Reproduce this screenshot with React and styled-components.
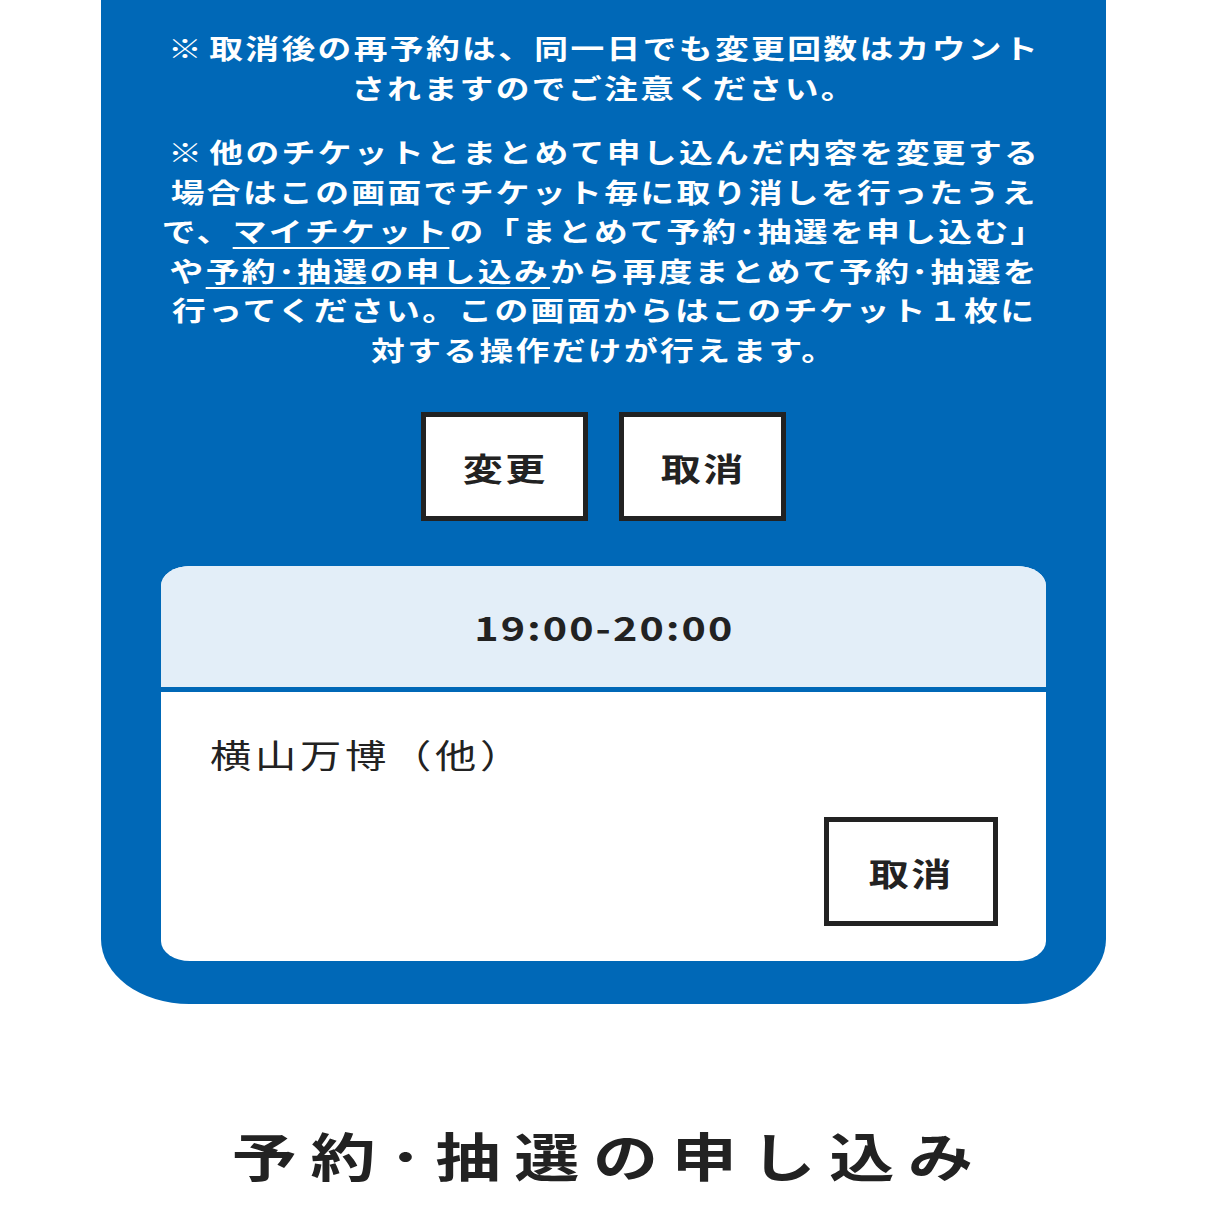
import styled, { createGlobalStyle } from 'styled-components';

const GlobalStyle = createGlobalStyle`
    body {
        margin: 0;
        background: #fff;
        font-family: "Noto Sans CJK JP", "Noto Sans", sans-serif;
        color: #222;
    }
`;

// the source renders its Japanese type a little wide, so text blocks get a horizontal stretch
const WIDE = 'scaleX(1.25)';

const Panel = styled.section`
    width: 1005px;
    margin: 0 auto;
    box-sizing: border-box;
    padding: 28px 60px 43px;
    background-color: #0068b7;
    border-radius: 0 0 88px 88px / 0 0 65px 65px;
`;

const Note = styled.p`
    width: fit-content;
    margin: ${(props) => props.first ? '0 auto' : '25px auto 0'};
    padding-left: 2px;
    color: #fff;
    font-size: 27px;
    font-weight: 700;
    line-height: 39.5px;
    letter-spacing: 1.9px;
    text-align: center;
    white-space: nowrap;
    transform: ${WIDE};
`;

const Mark = styled.span`
    margin-right: 4px;
`;

const Link = styled.a`
    color: #fff;
    text-decoration: underline;
    text-decoration-thickness: 2px;
    text-underline-offset: 5px;
`;

const Actions = styled.div`
    display: flex;
    justify-content: center;
    gap: 31px;
    margin-top: 43px;
`;

const Button = styled.button`
    width: ${(props) => props.wide ? '174px' : '167px'};
    height: 109px;
    box-sizing: border-box;
    padding: 0;
    border: 5px solid #222;
    background: #fff;
    color: #222;
    font-family: inherit;
    font-size: 32px;
    font-weight: 700;
    cursor: pointer;
`;

const Label = styled.span`
    display: inline-block;
    padding-left: 2px;
    letter-spacing: 2px;
    transform: ${WIDE};
`;

const Card = styled.div`
    margin-top: 45px;
    background: #fff;
    border-radius: 29px / 20px;
    overflow: hidden;
`;

const CardHead = styled.div`
    height: 121px;
    display: flex;
    align-items: center;
    justify-content: center;
    background: #e3eef8;
    border-bottom: 5px solid #0068b7;
`;

const Time = styled.span`
    display: inline-block;
    padding-left: 2px;
    font-size: 33px;
    font-weight: 700;
    letter-spacing: 1.7px;
    transform: ${WIDE};
`;

const CardBody = styled.div`
    padding: 38px 48px 35px 49px;
    display: flex;
    flex-direction: column;
    align-items: flex-start;
`;

const Name = styled.div`
    font-size: 33px;
    line-height: 48px;
    letter-spacing: 3px;
    transform: ${WIDE};
    transform-origin: left center;
`;

const BodyActions = styled.div`
    align-self: stretch;
    display: flex;
    justify-content: flex-end;
    margin-top: 39px;
`;

const Heading = styled.h2`
    width: fit-content;
    margin: 112px auto 0;
    padding-left: 11px;
    font-size: 52px;
    font-weight: 700;
    line-height: 78px;
    letter-spacing: 11px;
    color: #222;
    transform: ${WIDE};
`;

export default function App() {
    return (
        <>
            <GlobalStyle />
            <Panel>
                <Note first>
                    <Mark>※</Mark>取消後の再予約は、同一日でも変更回数はカウント<br />
                    されますのでご注意ください。
                </Note>
                <Note>
                    <Mark>※</Mark>他のチケットとまとめて申し込んだ内容を変更する<br />
                    場合はこの画面でチケット毎に取り消しを行ったうえ<br />
                    で、<Link href="#">マイチケット</Link>の「まとめて予約･抽選を申し込む」<br />
                    や<Link href="#">予約･抽選の申し込み</Link>から再度まとめて予約･抽選を<br />
                    行ってください。この画面からはこのチケット１枚に<br />
                    対する操作だけが行えます。
                </Note>
                <Actions>
                    <Button><Label>変更</Label></Button>
                    <Button><Label>取消</Label></Button>
                </Actions>
                <Card>
                    <CardHead>
                        <Time>19:00-20:00</Time>
                    </CardHead>
                    <CardBody>
                        <Name>横山万博（他）</Name>
                        <BodyActions>
                            <Button wide><Label>取消</Label></Button>
                        </BodyActions>
                    </CardBody>
                </Card>
            </Panel>
            <Heading>予約･抽選の申し込み</Heading>
        </>
    );
}
